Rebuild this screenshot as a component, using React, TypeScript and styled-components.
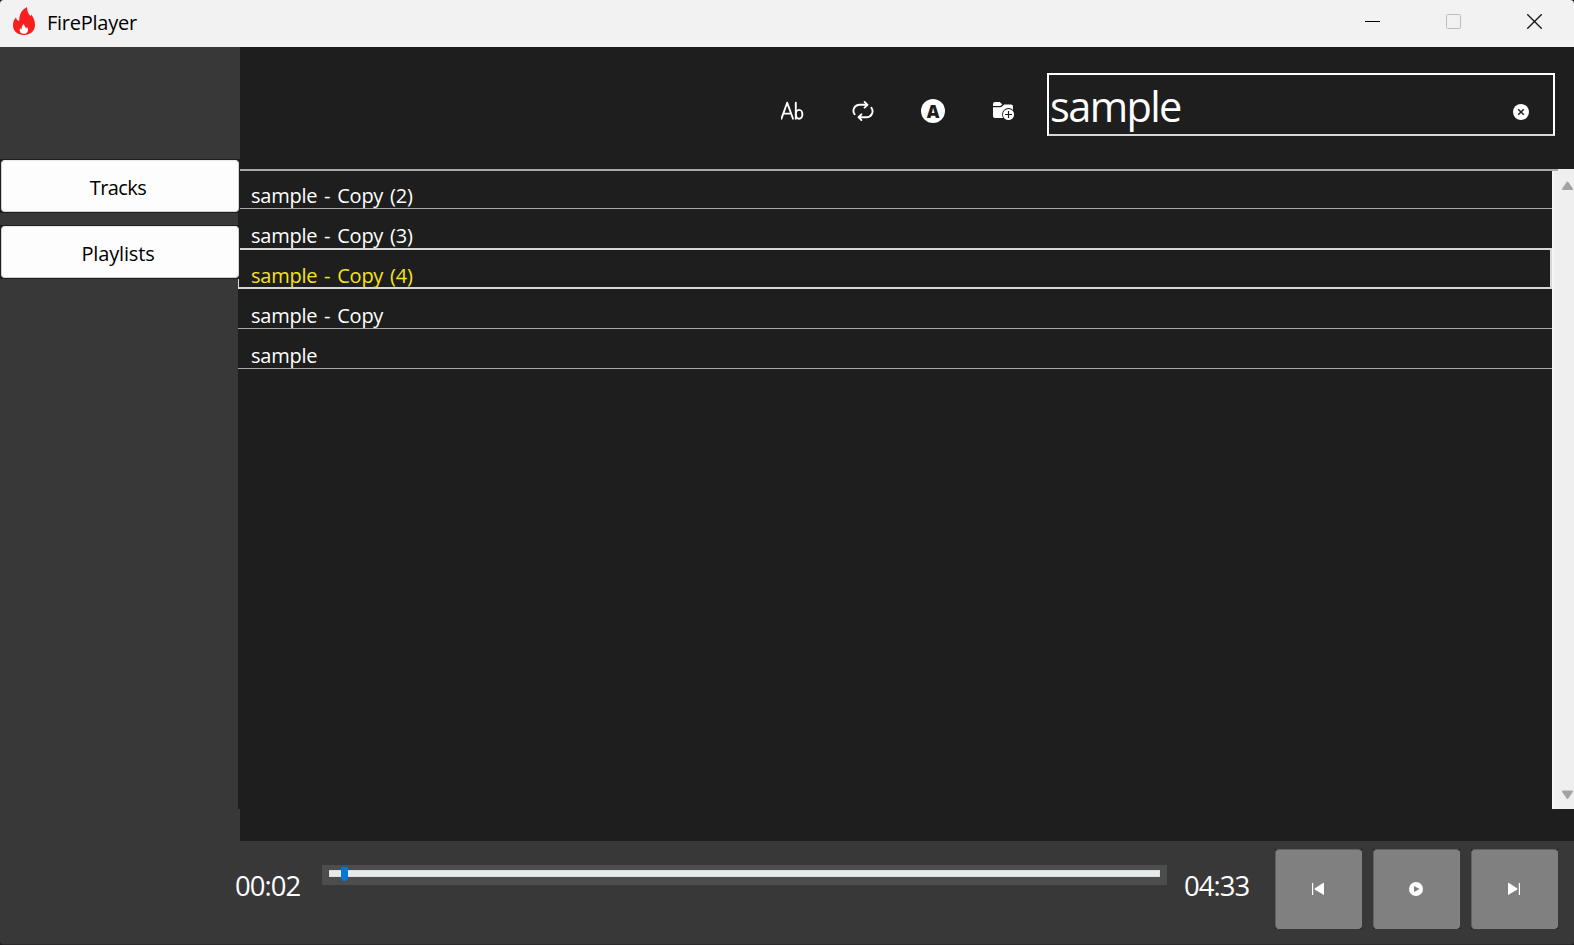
import React from 'react';
import styled, { createGlobalStyle } from 'styled-components';

const GlobalStyle = createGlobalStyle`
  * { box-sizing: border-box; }
  body { margin: 0; background: #1c1c1c; overflow: hidden; }
  button, input { font: inherit; }
`;

const Window = styled.div`
  width: 1574px;
  height: 945px;
  display: flex;
  flex-direction: column;
  overflow: hidden;
  border-radius: 4px;
  background: #383838;
  border-bottom: 1px solid #2c2a2a;
  font-family: 'Open Sans', 'Noto Sans', sans-serif;
`;

const TitleBar = styled.header`
  height: 47px;
  flex: none;
  display: flex;
  align-items: center;
  background: #f2f2f2;
  padding-left: 13px;
`;

const Logo = styled.svg`
  margin-bottom: 5px;
`;

const AppName = styled.h1`
  margin: 0 auto 0 12px;
  padding-bottom: 2px;
  font-size: 20px;
  font-weight: 400;
  line-height: 28px;
  letter-spacing: -0.25px;
  color: #000;
`;

const WindowButton = styled.button`
  width: 81px;
  height: 47px;
  padding: 0 0 4px 2px;
  border: 0;
  background: none;
  display: grid;
  place-items: center;
`;

const Body = styled.div`
  height: 794px;
  flex: none;
  display: flex;
`;

const Sidebar = styled.nav`
  width: 240px;
  flex: none;
  display: flex;
  flex-direction: column;
  gap: 12px;
  padding-top: 112px;
`;

const NavFrame = styled.div`
  position: relative;
  z-index: 1;
  height: 54px;
  padding: 1px;
  background: #1e1e1e;
`;

const NavButton = styled.button<{ $spacing: number }>`
  width: 100%;
  height: 100%;
  border: 1px solid #d0d0d0;
  border-top-color: #e9e9e9;
  border-radius: 4px;
  background: #fdfdfd;
  color: #000;
  font-size: 20px;
  line-height: 28px;
  letter-spacing: ${(p) => p.$spacing}px;
  padding: 3px 4px 0 0;
`;

const Main = styled.main`
  flex: 1;
  min-width: 0;
  display: flex;
  flex-direction: column;
  background: #1e1e1e;
`;

const Toolbar = styled.div`
  height: 122px;
  flex: none;
  display: flex;
  justify-content: flex-end;
  align-items: flex-start;
  padding: 26px 19px 0 0;
`;

const ToolButton = styled.button`
  width: 70px;
  height: 76px;
  padding: 0;
  border: 0;
  background: none;
  color: #fff;
  display: grid;
  place-items: center;
`;

const LetterBadge = styled.span`
  width: 24px;
  height: 24px;
  border-radius: 50%;
  background: #fff;
  color: #1e1e1e;
  font-size: 17.5px;
  font-weight: 800;
  line-height: 24px;
  text-align: center;
`;

const SearchBox = styled.label`
  width: 508px;
  height: 63px;
  margin-left: 9px;
  display: flex;
  align-items: center;
  border: 2px solid #fff;
  border-bottom-color: #d8d8d8;
  padding: 0 24px 0 0;
`;

const SearchInput = styled.input`
  flex: 1;
  min-width: 0;
  height: 59px;
  padding: 2px 0 0 1px;
  border: 0;
  outline: 0;
  background: none;
  color: #fff;
  font-size: 41.5px;
  letter-spacing: -1.6px;
`;

const ClearIcon = styled.svg`
  margin-top: 15px;
  flex: none;
`;

const TrackPane = styled.div`
  height: 640px;
  margin-left: -2px;
  display: flex;
  background: #1e1e1e;
`;

const TrackList = styled.ul`
  flex: 1;
  margin: 0;
  padding: 0;
  list-style: none;
  border-top: 2px solid #a9a9a9;
`;

const TrackRow = styled.li<{ $active?: boolean }>`
  height: ${(p) => (p.$active ? 41 : 40)}px;
  margin-top: ${(p) => (p.$active ? -1 : 0)}px;
  display: flex;
  align-items: flex-end;
  padding-left: ${(p) => (p.$active ? 12 : 13)}px;
  border-style: solid;
  border-color: ${(p) => (p.$active ? '#d8d8d8' : '#a9a9a9')};
  border-width: ${(p) => (p.$active ? '2px 2px 2px 1px' : '0 0 1px')};
  color: ${(p) => (p.$active ? '#f6e31f' : '#fff')};
  &:first-child { height: 38px; }
`;

const TrackName = styled.span<{ $active?: boolean }>`
  font-size: 20px;
  line-height: 28px;
  height: 27px;
  margin-bottom: ${(p) => (p.$active ? -2 : -1)}px;
  letter-spacing: -0.25px;
  word-spacing: 2px;
  white-space: pre;
`;

const Scrollbar = styled.div`
  width: 22px;
  flex: none;
  display: flex;
  flex-direction: column;
  align-items: flex-end;
  padding-right: 1px;
  background: linear-gradient(90deg, #f6f6f6 0 1px, #efefef 3px);
`;

const Notch = styled.div`
  width: 6px;
  height: 2px;
  margin: 0 15px -2px 0;
  background: #a9a9a9;
`;

const Player = styled.footer`
  flex: 1;
  display: flex;
  align-items: flex-start;
  padding-left: 235px;
`;

const Time = styled.span`
  width: 68px;
  margin-top: 26px;
  color: #fff;
  font-size: 27.5px;
  line-height: 38px;
  letter-spacing: -1px;
  white-space: nowrap;
`;

const Slider = styled.div`
  width: 845px;
  height: 20px;
  margin: 24px 17px 0 19px;
  padding: 2px 7px 0;
  background: #4d4d4d;
`;

const Groove = styled.div`
  height: 7px;
  margin-top: 3px;
  padding-left: 12px;
  background: #e7eaea;
  border: 1px solid #dcdfdf;
`;

const Thumb = styled.div`
  width: 7px;
  height: 14px;
  margin: -4px 0 0 -1px;
  background: #0078d7;
  clip-path: polygon(0 0, 100% 0, 100% 80%, 70% 100%, 30% 100%, 0 80%);
`;

const Controls = styled.div`
  display: flex;
  gap: 11px;
  margin: 8px 0 0 23px;
`;

const ControlFrame = styled.div`
  width: 87px;
  height: 80px;
  background: #1e1e1e;
`;

const ControlButton = styled.button`
  width: 100%;
  height: 80px;
  border: 1px solid #626262;
  border-right-color: #828282;
  border-bottom-color: #828282;
  border-radius: 4px;
  background: #808080;
  padding: 0 2px 0 0;
  display: grid;
  place-items: center;
`;

const tracks = ['sample - Copy (2)', 'sample - Copy (3)', 'sample - Copy (4)', 'sample - Copy', 'sample'];
const activeTrack = 'sample - Copy (4)';

const Flame = () => (
  <Logo width="22" height="28" viewBox="0 0 22 28">
    <path
      d="M14 0C14.200 3.200 14.800 5.500 16.200 7.600L17.300 9.200L18.200 7.500C20.400 10.600 22 13.800 22 17.800C22 24 17.500 28 11 28C4.500 28 0 24 0 18.200C0 15 1 12.500 3 10.600C3.200 12.600 4.300 13.500 6.300 14C6 8 8.500 2.800 14 0Z"
      fill="#fa1e1e"
    />
    <path
      d="M10.700 17C11.300 19 12.600 20 13.200 21.400C13.700 20.900 13.900 20.300 14 19.700C16.200 22.800 14.700 26.800 10.900 26.800C7.200 26.800 6 23.800 7.200 21.300C7.600 22 8 22.400 8.600 22.600C8.500 20.500 9.100 18.300 10.700 17Z"
      fill="#fff"
    />
  </Logo>
);

export default function App() {
  return (
    <>
      <GlobalStyle />
      <Window>
        <TitleBar>
          <Flame />
          <AppName>FirePlayer</AppName>
          <WindowButton aria-label="Minimize">
            <svg width="15" height="15"><path d="M0 7.500H15" stroke="#000" /></svg>
          </WindowButton>
          <WindowButton aria-label="Maximize">
            <svg width="15" height="15"><rect x=".5" y=".5" width="14" height="14" rx="1" fill="none" stroke="#bdbdbd" /></svg>
          </WindowButton>
          <WindowButton aria-label="Close">
            <svg width="15" height="15"><path d="M.3.300L14.700 14.700M14.700.300L.3 14.700" stroke="#111" strokeWidth="1.300" /></svg>
          </WindowButton>
        </TitleBar>
        <Body>
          <Sidebar>
            <NavFrame><NavButton $spacing={-0.6}>Tracks</NavButton></NavFrame>
            <NavFrame><NavButton $spacing={-0.15}>Playlists</NavButton></NavFrame>
          </Sidebar>
          <Main>
            <Toolbar>
              <ToolButton aria-label="Sort by name">
                <svg width="24" height="20" viewBox="0.5 0 24 20" fill="none" stroke="#fff" strokeWidth="1.900" strokeLinecap="round" strokeLinejoin="round">
                  <path d="M.9 17.700L6.700 1.700L12.500 17.700M3 12.600H10.400M15.300 1.700V17.700" />
                  <ellipse cx="18.600" cy="13.300" rx="3.300" ry="4.400" />
                </svg>
              </ToolButton>
              <ToolButton aria-label="Repeat">
                <svg width="22" height="22" viewBox="0 0 22 22" fill="none" stroke="#fff" strokeWidth="1.900" strokeLinecap="round" strokeLinejoin="round">
                  <path d="M2.600 14.300A6 6 0 0 1 7.500 4.800H14.800M12.600 1.900L15.500 4.800L12.600 7.700" />
                  <path d="M19.400 7.700A6 6 0 0 1 14.500 17.200H7.200M9.400 14.300L6.500 17.200L9.400 20.100" />
                </svg>
              </ToolButton>
              <ToolButton aria-label="Autoplay">
                <LetterBadge>A</LetterBadge>
              </ToolButton>
              <ToolButton aria-label="Add folder">
                <svg width="24" height="20" viewBox="-2 0 24 20">
                  <path d="M0 4.500V3Q0 1 2 1H6.600L9.300 3.300L8 4.500Q7.600 4.900 7 4.900H0Z" fill="#fff" />
                  <path d="M0 6.300H7.200Q8.300 6.300 9 5.600L11.200 3.500H18Q20 3.500 20 5.500V15Q20 17 18 17H2Q0 17 0 15Z" fill="#fff" />
                  <circle cx="15.500" cy="13.500" r="6.500" fill="#1e1e1e" />
                  <circle cx="15.500" cy="13.500" r="5.600" fill="#fff" />
                  <path d="M15.500 10V17M12 13.500H19" stroke="#1e1e1e" strokeWidth="1.200" />
                </svg>
              </ToolButton>
              <SearchBox>
                <SearchInput defaultValue="sample" spellCheck={false} />
                <ClearIcon width="16" height="16" viewBox="0 0 16 16">
                  <circle cx="8" cy="8" r="8" fill="#fff" />
                  <path d="M5.200 5.200L10.800 10.800M10.800 5.200L5.200 10.800" stroke="#1e1e1e" strokeWidth="1.500" />
                </ClearIcon>
              </SearchBox>
            </Toolbar>
            <TrackPane>
              <TrackList>
                {tracks.map((name) => (
                  <TrackRow key={name} $active={name === activeTrack}>
                    <TrackName $active={name === activeTrack}>{name}</TrackName>
                  </TrackRow>
                ))}
              </TrackList>
              <Scrollbar>
                <Notch />
                <svg width="11" height="640" viewBox="0 0 11 640" fill="#a3a3a3" stroke="#a3a3a3" strokeWidth="2" strokeLinejoin="round">
                  <path d="M1 20L5.500 13.500L10 20Z" />
                  <path d="M1 622.500L5.500 629L10 622.500Z" />
                </svg>
              </Scrollbar>
            </TrackPane>
          </Main>
        </Body>
        <Player>
          <Time>00:02</Time>
          <Slider>
            <Groove><Thumb /></Groove>
          </Slider>
          <Time>04:33</Time>
          <Controls>
            <ControlFrame>
              <ControlButton aria-label="Previous">
                <svg width="14" height="14" fill="#fff"><path d="M1 1H2.200V13H1ZM13 1V13L4 7.800Q3 7 4 6.200L12 1Q13 .5 13 1Z" /></svg>
              </ControlButton>
            </ControlFrame>
            <ControlFrame>
              <ControlButton aria-label="Play">
                <svg width="14" height="14"><circle cx="7" cy="7" r="7" fill="#fff" /><path d="M5 4L10.500 7L5 10Z" fill="#808080" /></svg>
              </ControlButton>
            </ControlFrame>
            <ControlFrame>
              <ControlButton aria-label="Next">
                <svg width="14" height="14" fill="#fff"><path d="M13 1H11.800V13H13ZM1 1V13L10 7.800Q11 7 10 6.200L2 1Q1 .5 1 1Z" /></svg>
              </ControlButton>
            </ControlFrame>
          </Controls>
        </Player>
      </Window>
    </>
  );
}
